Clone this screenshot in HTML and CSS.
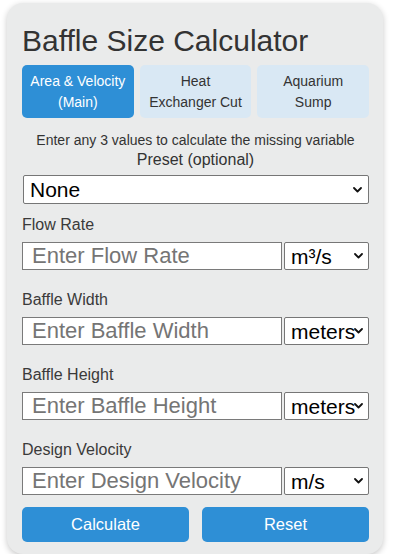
FILE: index.html
```html
<!DOCTYPE html>
<html lang="en">
<head>
<meta charset="utf-8">
<title>Baffle Size Calculator</title>
<link rel="stylesheet" href="styles.css">
</head>
<body>
<div class="card">
  <h1 class="title">Baffle Size Calculator</h1>
  <div class="tabs">
    <button class="tab active">Area &amp; Velocity (Main)</button>
    <button class="tab">Heat Exchanger Cut</button>
    <button class="tab">Aquarium Sump</button>
  </div>
  <p class="hint">Enter any 3 values to calculate the missing variable</p>
  <label class="preset-label" for="preset">Preset (optional)</label>
  <div class="select-wrap preset-wrap">
    <select id="preset" class="preset">
      <option>None</option>
    </select>
    <svg class="chev" width="9" height="6" viewBox="0 0 9 6"><path d="M1 1 L4.5 4.5 L8 1" fill="none" stroke="#111" stroke-width="1.8" stroke-linecap="round" stroke-linejoin="round"/></svg>
  </div>

  <div class="group">
    <label class="field-label" for="flow">Flow Rate</label>
    <div class="row">
      <input id="flow" class="field" type="text" placeholder="Enter Flow Rate">
      <div class="select-wrap unit-wrap">
        <select class="unit"><option>m³/s</option></select>
        <svg class="chev" width="9" height="6" viewBox="0 0 9 6"><path d="M1 1 L4.5 4.5 L8 1" fill="none" stroke="#111" stroke-width="1.8" stroke-linecap="round" stroke-linejoin="round"/></svg>
      </div>
    </div>
  </div>
  <div class="group">
    <label class="field-label" for="width">Baffle Width</label>
    <div class="row">
      <input id="width" class="field" type="text" placeholder="Enter Baffle Width">
      <div class="select-wrap unit-wrap">
        <select class="unit"><option>meters</option></select>
        <svg class="chev" width="9" height="6" viewBox="0 0 9 6"><path d="M1 1 L4.5 4.5 L8 1" fill="none" stroke="#111" stroke-width="1.8" stroke-linecap="round" stroke-linejoin="round"/></svg>
      </div>
    </div>
  </div>
  <div class="group">
    <label class="field-label" for="height">Baffle Height</label>
    <div class="row">
      <input id="height" class="field" type="text" placeholder="Enter Baffle Height">
      <div class="select-wrap unit-wrap">
        <select class="unit"><option>meters</option></select>
        <svg class="chev" width="9" height="6" viewBox="0 0 9 6"><path d="M1 1 L4.5 4.5 L8 1" fill="none" stroke="#111" stroke-width="1.8" stroke-linecap="round" stroke-linejoin="round"/></svg>
      </div>
    </div>
  </div>
  <div class="group">
    <label class="field-label" for="vel">Design Velocity</label>
    <div class="row">
      <input id="vel" class="field" type="text" placeholder="Enter Design Velocity">
      <div class="select-wrap unit-wrap">
        <select class="unit"><option>m/s</option></select>
        <svg class="chev" width="9" height="6" viewBox="0 0 9 6"><path d="M1 1 L4.5 4.5 L8 1" fill="none" stroke="#111" stroke-width="1.8" stroke-linecap="round" stroke-linejoin="round"/></svg>
      </div>
    </div>
  </div>
  <div class="actions">
    <button class="btn">Calculate</button>
    <button class="btn">Reset</button>
  </div>
</div>
</body>
</html>
```

FILE: styles.css
```css
* { box-sizing: border-box; }

html, body {
  margin: 0;
  padding: 0;
  background: #ffffff;
  font-family: "Liberation Sans", Arial, sans-serif;
  color: #333333;
}

.card {
  width: 376px;
  margin: 3px 0 0 7px;
  padding: 21px 14px 12px 15px;
  background: #eaebeb;
  border-radius: 16px;
  box-shadow: 0 2px 6px rgba(0, 0, 0, 0.22);
}

.title {
  margin: 0 0 7px;
  font-size: 30px;
  line-height: 34px;
  font-weight: normal;
  color: #333333;
}

.tabs {
  display: grid;
  grid-template-columns: 1fr 1fr 1fr;
  gap: 6px;
}

.tab {
  height: 53px;
  padding: 0 6px;
  border: none;
  border-radius: 5px;
  background: #d9e8f4;
  color: #333333;
  font-family: "Liberation Sans", Arial, sans-serif;
  font-size: 14px;
  line-height: 21px;
  text-align: center;
}

.tab.active {
  background: #2e8fd6;
  color: #ffffff;
}

.hint {
  margin: 14px 0 0;
  font-size: 14px;
  line-height: 16px;
  text-align: center;
}

.preset-label {
  display: block;
  margin-top: 3px;
  font-size: 16px;
  line-height: 18px;
  text-align: center;
}

.select-wrap {
  position: relative;
  flex: none;
}

.select-wrap select {
  -webkit-appearance: none;
  appearance: none;
  display: block;
  padding: 0 0 0 6px;
  font-family: "Liberation Sans", Arial, sans-serif;
  font-size: 21px;
  color: #000000;
  background: #ffffff;
  border: 1px solid #767676;
  border-radius: 2px;
  overflow: hidden;
  white-space: nowrap;
}

.chev {
  position: absolute;
  right: 7px;
  top: 50%;
  margin-top: -3px;
  pointer-events: none;
}

.preset-wrap {
  width: 346px;
  margin: 6px 0 0 1px;
}

.preset {
  width: 100%;
  height: 29px;
}

.group {
  margin-top: 12px;
}

.group + .group {
  margin-top: 21px;
}

.field-label {
  display: block;
  font-size: 16px;
  line-height: 18px;
  color: #3a3a3a;
  margin-bottom: 8px;
}

.row {
  display: flex;
  gap: 2px;
  width: 347px;
}

.field {
  width: 260px;
  min-width: 0;
  flex: none;
  height: 28px;
  padding: 0 9px;
  font-family: "Liberation Sans", Arial, sans-serif;
  font-size: 22px;
  color: #000000;
  background: #ffffff;
  border: 1px solid #7a7a7a;
  border-radius: 0;
}

.field::placeholder {
  color: #757575;
}

.unit-wrap {
  width: 85px;
}

.unit {
  width: 85px;
  height: 28px;
}

.unit-wrap .chev {
  right: 6px;
}

.actions {
  display: grid;
  grid-template-columns: 1fr 1fr;
  gap: 13px;
  margin-top: 12px;
}

.btn {
  height: 35px;
  border: none;
  border-radius: 5px;
  background: #2e8fd6;
  color: #ffffff;
  font-family: "Liberation Sans", Arial, sans-serif;
  font-size: 16.5px;
}
```
